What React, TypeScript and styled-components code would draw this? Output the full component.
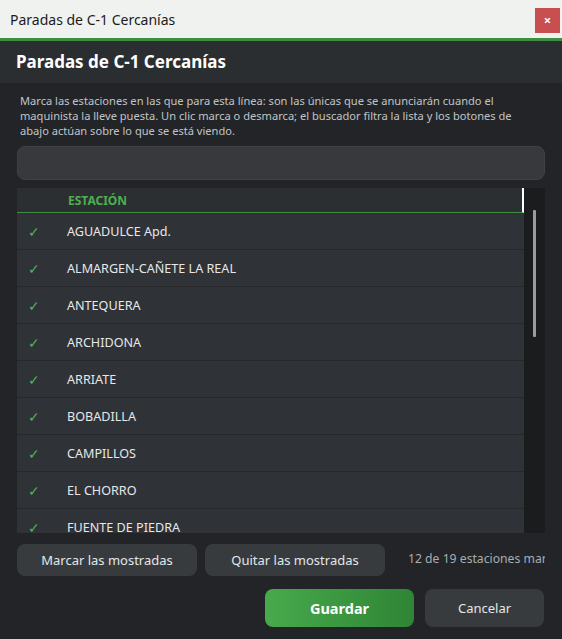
import React from 'react';
import styled, { createGlobalStyle } from 'styled-components';

const GlobalStyle = createGlobalStyle`
    html, body {
        margin: 0;
        padding: 0;
        background: #222427;
    }
    * {
        box-sizing: border-box;
    }
`;

const FONT = `"Noto Sans", "Open Sans", "DejaVu Sans", sans-serif`;

/** ____________________________________________________    WINDOW
 * */
const Window = styled('div')({
    width: 562,
    height: 639,
    display: 'flex',
    flexDirection: 'column',
    overflow: 'hidden',
    fontFamily: FONT,
    background: '#222427',
});

const TitleBar = styled('div')({
    height: 41,
    flexShrink: 0,
    display: 'flex',
    alignItems: 'center',
    justifyContent: 'space-between',
    padding: '0 2px 0 10px',
    background: '#eff2ef',
    color: '#1b1b1b',
    fontSize: 14,
    borderBottom: '3px solid #3f8f43',
});

const CloseButton = styled('button')({
    width: 25,
    height: 25,
    marginTop: 3,
    border: 'none',
    padding: 0,
    background: '#c74f50',
    color: '#ffffff',
    fontFamily: FONT,
    fontSize: 13,
    fontWeight: 700,
    lineHeight: '25px',
    cursor: 'pointer',
});

const Header = styled('div')({
    height: 42,
    flexShrink: 0,
    display: 'flex',
    alignItems: 'center',
    padding: '0 16px 2px',
    background: '#2b2e31',
    color: '#ffffff',
    fontSize: 17,
    fontWeight: 700,
});

const Content = styled('div')({
    display: 'flex',
    flexDirection: 'column',
    padding: '0 17px',
});

const Description = styled('p')({
    margin: '10px 0 0',
    padding: '0 3px',
    fontSize: 11.1,
    lineHeight: '15px',
    color: '#c0c4c7',
});

const Search = styled('input')({
    marginTop: 8,
    height: 34,
    borderRadius: 8,
    border: '1px solid #3f4245',
    background: '#37393c',
    outline: 'none',
    color: '#e5e5e5',
    fontFamily: FONT,
    fontSize: 13,
    padding: '0 10px',
});

/** ____________________________________________________    TABLE
 * */
const Table = styled('div')({
    marginTop: 8,
    height: 345,
    display: 'flex',
    overflow: 'hidden',
});

const Rows = styled('div')({
    flex: 1,
    display: 'flex',
    flexDirection: 'column',
    overflow: 'hidden',
    background: '#2f3236',
});

const HeadRow = styled('div')({
    height: 25,
    flexShrink: 0,
    display: 'flex',
    alignItems: 'center',
    background: '#2c2f32',
    borderBottom: '1px solid #3f8f43',
    borderRight: '2px solid #ffffff',
    paddingLeft: 51,
    color: '#4caf50',
    fontSize: 12,
    fontWeight: 700,
});

const Row = styled('div')({
    height: 37,
    flexShrink: 0,
    display: 'flex',
    alignItems: 'center',
    borderBottom: '1px solid #26282b',
    color: '#e6e8ea',
    fontSize: 12.6,
});

const Check = styled('span')<{ $on: boolean }>(({ $on }) => ({
    width: 50,
    paddingLeft: 11,
    paddingTop: 2,
    color: '#52b457',
    fontFamily: '"DejaVu Sans", sans-serif',
    fontSize: 14,
    fontWeight: 300,
    visibility: $on ? 'visible' : 'hidden',
}));

const Track = styled('div')({
    width: 21,
    flexShrink: 0,
    background: '#1b1c1d',
    padding: '22px 0 0 9px',
});

const Thumb = styled('div')({
    width: 3,
    height: 127,
    borderRadius: 1,
    background: '#9b9b9b',
});

/** ____________________________________________________    FOOTER
 * */
const Tools = styled('div')({
    marginTop: 11,
    height: 32,
    display: 'flex',
    alignItems: 'center',
    gap: 8,
    overflow: 'hidden',
});

const Button = styled('button')<{ $width: number; $primary?: boolean }>(({ $width, $primary }) => ({
    width: $width,
    flexShrink: 0,
    height: '100%',
    border: 'none',
    borderRadius: 8,
    background: $primary ? 'linear-gradient(90deg, #47aa4c 0%, #2f8535 100%)' : '#383b3e',
    color: $primary ? '#ffffff' : '#e4e6e8',
    fontFamily: FONT,
    fontSize: $primary ? 14.5 : 13,
    fontWeight: $primary ? 700 : 400,
    cursor: 'pointer',
}));

const Count = styled('span')({
    marginLeft: 15,
    paddingBottom: 3,
    whiteSpace: 'nowrap',
    color: '#a9adb0',
    fontSize: 12.2,
});

const Actions = styled('div')({
    marginTop: 13,
    height: 38,
    display: 'flex',
    justifyContent: 'flex-end',
    gap: 11,
    paddingRight: 1,
});

const stations: [string, boolean][] = [
    ['AGUADULCE Apd.', true],
    ['ALMARGEN-CAÑETE LA REAL', true],
    ['ANTEQUERA', true],
    ['ARCHIDONA', true],
    ['ARRIATE', true],
    ['BOBADILLA', true],
    ['CAMPILLOS', true],
    ['EL CHORRO', true],
    ['FUENTE DE PIEDRA', true],
];

const App = () => {
    return (
        <Window>
            <GlobalStyle/>
            <TitleBar>
                <span>Paradas de C-1 Cercanías</span>
                <CloseButton>×</CloseButton>
            </TitleBar>

            <Header>Paradas de C-1 Cercanías</Header>

            <Content>
                <Description>
                    Marca las estaciones en las que para esta línea: son las únicas que se anunciarán cuando el
                    maquinista la lleve puesta. Un clic marca o desmarca; el buscador filtra la lista y los botones de
                    abajo actúan sobre lo que se está viendo.
                </Description>

                <Search/>

                <Table>
                    <Rows>
                        <HeadRow>ESTACIÓN</HeadRow>
                        {stations.map(([name, on]) => (
                            <Row key={name}>
                                <Check $on={on}>✓</Check>
                                {name}
                            </Row>
                        ))}
                    </Rows>
                    <Track><Thumb/></Track>
                </Table>

                <Tools>
                    <Button $width={180}>Marcar las mostradas</Button>
                    <Button $width={180}>Quitar las mostradas</Button>
                    <Count>12 de 19 estaciones marcadas</Count>
                </Tools>

                <Actions>
                    <Button $width={149} $primary>Guardar</Button>
                    <Button $width={119}>Cancelar</Button>
                </Actions>
            </Content>
        </Window>
    );
};

export default App;
